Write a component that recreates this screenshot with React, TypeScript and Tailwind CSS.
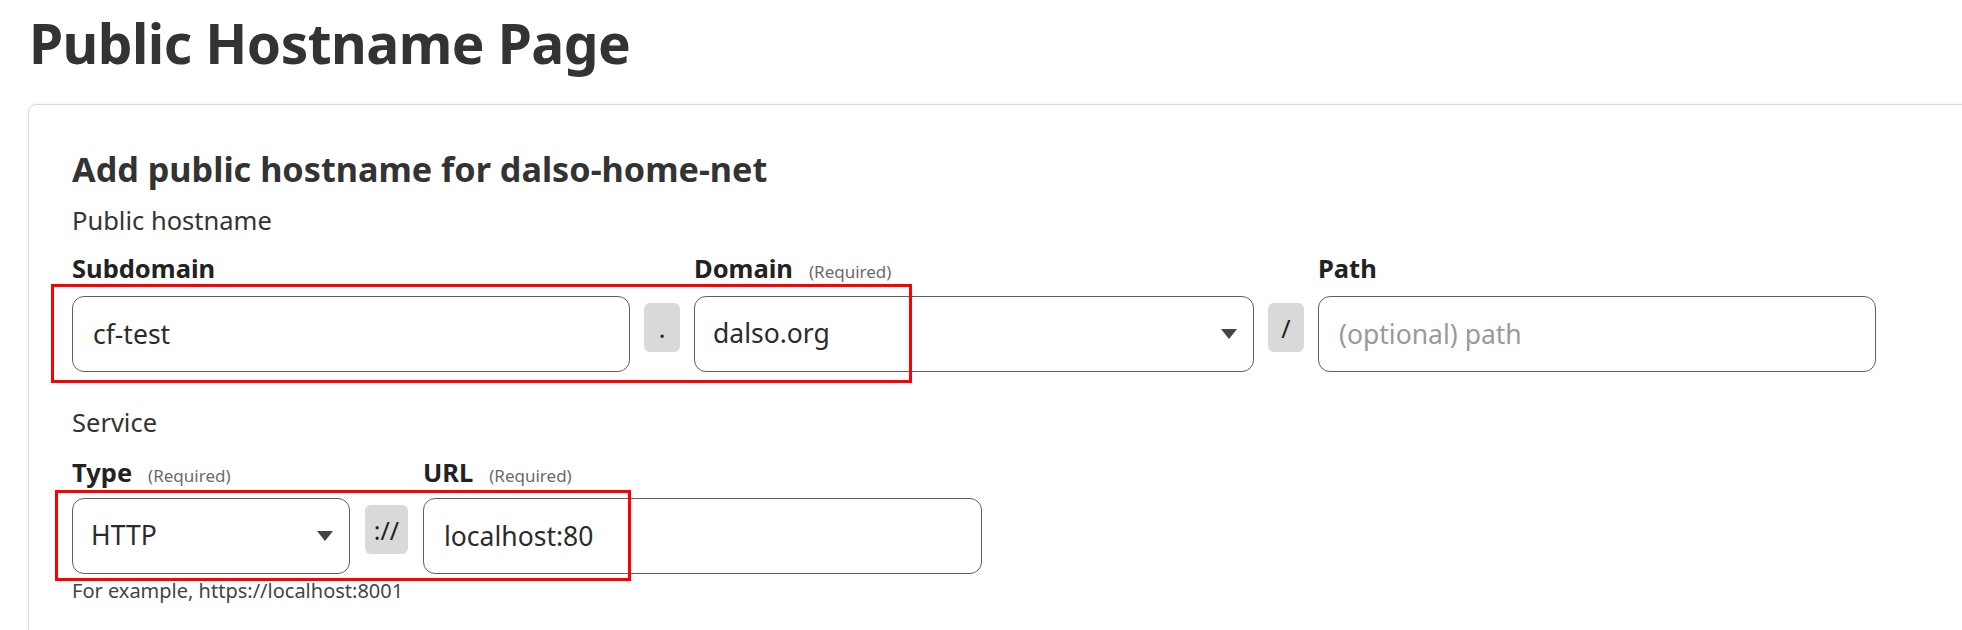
import React from 'react';

const Required = () => (
  <span className="ml-4 text-[17px] font-normal text-[#6b6b6b]">(Required)</span>
);

const Label = ({ children }: { children: React.ReactNode }) => (
  <div className="flex items-baseline text-[25.5px] font-bold leading-[34px] text-[#222]">{children}</div>
);

const Sep = ({ children }: { children: React.ReactNode }) => (
  <div className="mt-[7px] flex h-[49px] items-center justify-center rounded-md bg-[#d9d9d9] text-[25px] leading-[34px] text-[#222]">
    {children}
  </div>
);

const TextInput = ({ value, placeholder }: { value?: string; placeholder?: string }) => (
  <input
    readOnly
    defaultValue={value}
    placeholder={placeholder}
    className="h-[76px] w-full rounded-[12px] border border-[#5f5f5f] bg-white px-5 text-[26.5px] text-[#2b2b2b] outline-none placeholder:text-[#9a9a9a]"
  />
);

const Select = ({ value }: { value: string }) => (
  <div className="flex h-[76px] items-center justify-between rounded-[12px] border border-[#5f5f5f] bg-white pl-[18px] pr-[16px] text-[26.5px] text-[#2b2b2b]">
    <span>{value}</span>
    <svg width="16" height="10" viewBox="0 0 16 10">
      <polygon points="0,0 16,0 8,10" fill="#444" />
    </svg>
  </div>
);

export default function App() {
  return (
    <div className="relative h-[630px] overflow-hidden bg-white font-['Noto_Sans',sans-serif] text-[#333]">
      <h1 className="ml-[29px] mt-[10px] text-[55px] font-bold leading-[66px] tracking-[-0.01em] text-[#333]">
        Public Hostname Page
      </h1>

      <div className="ml-[28px] mt-[28px] w-[2000px] rounded-lg border border-[#dcdcdc] pb-16 pl-[43px] pt-[43px] shadow-[0_0_4px_rgba(0,0,0,0.06)]">
        <h2 className="text-[34.2px] font-bold leading-[42px] text-[#333]">Add public hostname for dalso-home-net</h2>
        <p className="mt-[13px] text-[25.5px] leading-[34px] text-[#333]">Public hostname</p>

        {/* hostname row */}
        <div className="mt-[14px] grid grid-cols-[558px_36px_560px_36px_558px] gap-x-[14px] gap-y-[7px]">
          <Label>Subdomain</Label>
          <div />
          <Label>
            Domain <Required />
          </Label>
          <div />
          <Label>Path</Label>

          <TextInput value="cf-test" />
          <Sep>.</Sep>
          <Select value="dalso.org" />
          <Sep>/</Sep>
          <TextInput placeholder="(optional) path" />
        </div>

        <p className="mt-[33px] text-[25.5px] leading-[34px] text-[#333]">Service</p>

        {/* service row */}
        <div className="mt-[16px] grid grid-cols-[278px_43px_559px] gap-x-[15px] gap-y-[5px]">
          <Label>
            Type <Required />
          </Label>
          <div />
          <Label>
            URL <Required />
          </Label>

          <Select value="HTTP" />
          <Sep>://</Sep>
          <TextInput value="localhost:80" />
        </div>
        <p className="mt-[5px] text-[20px] leading-[24px] text-[#444]">For example, https://localhost:8001</p>
      </div>

      {/* annotation boxes */}
      <div className="absolute left-[51px] top-[284px] h-[99px] w-[861px] border-[3px] border-[#f00]" />
      <div className="absolute left-[55px] top-[490px] h-[91px] w-[576px] border-[3px] border-[#f00]" />
    </div>
  );
}
